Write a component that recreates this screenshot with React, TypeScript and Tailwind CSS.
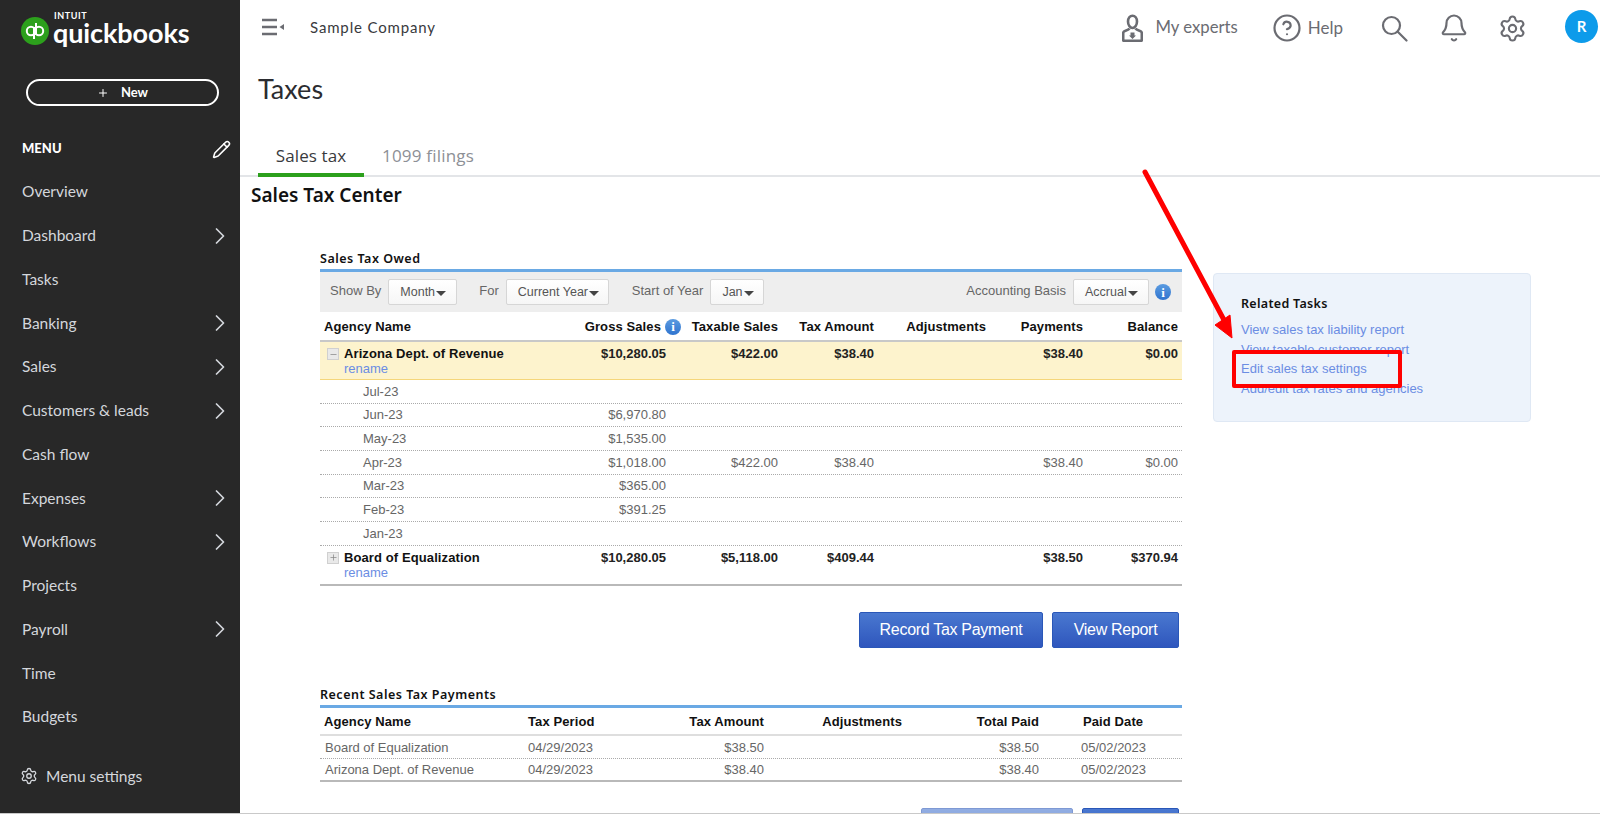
import { Bell, ChevronRight, CircleHelp, Minus, Pencil, Plus, Settings } from "lucide-react"

const menu = [
  { label: "Overview" },
  { label: "Dashboard", more: true },
  { label: "Tasks" },
  { label: "Banking", more: true },
  { label: "Sales", more: true },
  { label: "Customers & leads", more: true },
  { label: "Cash flow" },
  { label: "Expenses", more: true },
  { label: "Workflows", more: true },
  { label: "Projects" },
  { label: "Payroll", more: true },
  { label: "Time" },
  { label: "Budgets" },
]

const months = [
  ["Jul-23", "", "", "", "", ""],
  ["Jun-23", "$6,970.80", "", "", "", ""],
  ["May-23", "$1,535.00", "", "", "", ""],
  ["Apr-23", "$1,018.00", "$422.00", "$38.40", "$38.40", "$0.00"],
  ["Mar-23", "$365.00", "", "", "", ""],
  ["Feb-23", "$391.25", "", "", "", ""],
  ["Jan-23", "", "", "", "", ""],
]

const payments = [
  ["Board of Equalization", "04/29/2023", "$38.50", "$38.50", "05/02/2023"],
  ["Arizona Dept. of Revenue", "04/29/2023", "$38.40", "$38.40", "05/02/2023"],
]

const owedGrid = "grid grid-cols-[346px_112px_96px_112px_97px_95px] pr-[4px]"
const paidGrid = "grid grid-cols-[208px_112px_124px_138px_137px_143px]"

function Logo() {
  return (
    <div className="flex h-[60px] items-center pl-[21px] pt-[1px]">
      <svg width="28" height="28" viewBox="0 0 28 28" className="shrink-0">
        <circle cx="14" cy="14" r="14" fill="#2ca01c" />
        <circle cx="10" cy="14" r="4.2" fill="none" stroke="#fff" strokeWidth="2" />
        <circle cx="18" cy="14" r="4.2" fill="none" stroke="#fff" strokeWidth="2" />
        <path d="M13 10v12M15 6v12" stroke="#fff" strokeWidth="2" fill="none" />
      </svg>
      <div className="mb-[4px] ml-[4px] flex flex-col text-white font-['Lato',sans-serif]">
        <span className="h-[8px] pl-[1px] text-[9px] font-bold leading-[8px] tracking-[0.6px]">INTUIT</span>
        <span className="text-[27px] font-bold leading-[25px] tracking-[-0.1px]">quickbooks</span>
      </div>
    </div>
  )
}

function Sidebar() {
  return (
    <aside className="flex h-full w-[240px] shrink-0 flex-col bg-[#282828] font-['Lato',sans-serif] text-[#d4d7dc]">
      <Logo />
      <button className="ml-[26px] mt-[19px] flex h-[27px] w-[193px] items-center justify-center rounded-full border-2 border-white text-[13px] font-bold text-white">
        <Plus className="mr-[12px] h-[12px] w-[12px]" strokeWidth={2} />
        New
      </button>
      <div className="mt-[30px] flex h-[26px] items-center justify-between pl-[22px] pr-[9px]">
        <span className="text-[13px] font-black text-white">MENU</span>
        <Pencil className="h-[19px] w-[19px] text-white" strokeWidth={2} />
      </div>
      <nav className="mt-[8px] flex flex-col">
        {menu.map((item) => (
          <div key={item.label} className="flex h-[43.75px] items-center justify-between pl-[22px] pr-[6px] text-[15.5px]">
            <span>{item.label}</span>
            {item.more && <ChevronRight className="h-[28px] w-[28px]" strokeWidth={1.5} />}
          </div>
        ))}
      </nav>
      <div className="mt-[26px] flex items-center pl-[20px] text-[15.5px]">
        <Settings className="mr-[8px] h-[18px] w-[18px]" strokeWidth={1.75} />
        Menu settings
      </div>
    </aside>
  )
}

function TopBar() {
  return (
    <header className="flex h-[56px] items-center text-[#6b6c72] font-['Lato',sans-serif]">
      <svg width="24" height="18" viewBox="0 0 24 18" className="ml-[21px] mt-[-2px]">
        <path d="M1 2h15M1 9h15M1 16h15" stroke="#6b6c72" strokeWidth="2.4" fill="none" />
        <path d="M18.5 9l4.500-3v6z" fill="#6b6c72" />
      </svg>
      <span className="ml-[25px] mt-[-1px] text-[15px] tracking-[0.85px] text-[#393a3d]">Sample Company</span>
      <div className="ml-auto flex items-center pr-[2px]">
        <svg width="21" height="28" viewBox="0 0 21 28" fill="none" stroke="#6b6c72" strokeWidth="2.600">
          <path d="M6 7.500c0-3.500 2-5.800 4.500-5.800S15 4 15 7.500 13 14 10.500 14 6 11 6 7.500z" />
          <path d="M7.500 14.500c-1 1.500-3 1.800-5 2.700-1 .5-1.300 1-1.300 2V26c0 .6.300.9.900.9h16.800c.6 0 .9-.3.900-.9v-6.800c0-1-.3-1.500-1.300-2-2-.9-4-1.200-5-2.700" />
          <path d="M8.500 18.500h4v3h1.500l-3.500 3.500-3.500-3.500h1.500z" fill="#6b6c72" stroke="none" />
        </svg>
        <span className="ml-[13px] text-[16.700px]">My experts</span>
        <CircleHelp className="ml-[34px] h-[30px] w-[30px]" strokeWidth={1.75} />
        <span className="ml-[6px] text-[17px]">Help</span>
        <svg width="27" height="27" viewBox="0 0 27 27" fill="none" stroke="#6b6c72" strokeWidth="2.200" className="ml-[38px]">
          <circle cx="10.500" cy="10.500" r="8.500" />
          <path d="M16.500 16.500L25.500 25.500" strokeLinecap="round" />
        </svg>
        <Bell className="ml-[31px] h-[30px] w-[30px]" strokeWidth={1.75} />
        <Settings className="ml-[29px] h-[29px] w-[29px]" strokeWidth={1.75} />
        <div className="ml-[38px] mt-[-4px] flex h-[33px] w-[33px] items-center justify-center rounded-full bg-[#0d9bea] text-[15px] font-bold text-white">
          R
        </div>
      </div>
    </header>
  )
}

function Dropdown({ label, width }: { label: string; width: string }) {
  return (
    <div className={`${width} flex h-[26px] items-center rounded-[2px] border border-[#d6d6d6] bg-gradient-to-b from-white to-[#f6f6f6] pl-[11px] text-[12.500px] text-[#555]`}>
      {label}
      <span className="ml-[1px] mt-[2px] h-0 w-0 border-x-[5px] border-t-[5px] border-x-transparent border-t-[#444]" />
    </div>
  )
}

function InfoDot() {
  return (
    <span className="flex h-[16px] w-[16px] items-center justify-center rounded-full bg-gradient-to-b from-[#5b9be0] to-[#2f74cf] font-['Liberation_Serif',serif] text-[13px] font-bold leading-none text-white">
      i
    </span>
  )
}

function AgencyRow({ name, values, open }: { name: string; values: string[]; open?: boolean }) {
  const rowClass = open
    ? "h-[38px] border-b border-[#f5d67a] bg-[#fdf3cd] pt-[1px]"
    : "h-[40px] border-b-2 border-[#b9b9b9] pt-[1px]"
  return (
    <div className={`${owedGrid} ${rowClass}`}>
      <div className="flex pl-[7px] pt-[3px]">
        <span className="mt-[2px] flex h-[12px] w-[12px] items-center justify-center border border-[#d0d0d0] bg-[#e9e9e9] text-[#888]">
          {open ? <Minus className="h-[9px] w-[9px]" strokeWidth={2} /> : <Plus className="h-[9px] w-[9px]" strokeWidth={2} />}
        </span>
        <div className="ml-[5px] flex-1 leading-[15px]">
          <div className="flex justify-between">
            <span className="text-[13px] font-bold tracking-[0.1px] text-[#111]">{name}</span>
            <span className="text-[13px] font-bold text-[#222]">$10,280.05</span>
          </div>
          <div className="text-[13px] text-[#6b8de3]">rename</div>
        </div>
      </div>
      {values.map((value, i) => (
        <div key={i} className="pt-[3px] text-right text-[13px] font-bold leading-[15px] text-[#222]">
          {value}
        </div>
      ))}
    </div>
  )
}

function SalesTaxOwed() {
  return (
    <section>
      <h3 className="h-[21px] text-[12.500px] font-semibold leading-[21px] tracking-[0.5px] text-[#111] font-['Noto_Sans',sans-serif]">Sales Tax Owed</h3>
      <div className="flex h-[43px] items-center border-t-[3px] border-[#6aa9e4] bg-[#eeeeee] pl-[10px] text-[13px] text-[#666]">
        <span className="mt-[-2px]">Show By</span>
        <div className="ml-[7px]"><Dropdown label="Month" width="w-[69px]" /></div>
        <span className="ml-[22px] mt-[-2px]">For</span>
        <div className="ml-[7px]"><Dropdown label="Current Year" width="w-[103px]" /></div>
        <span className="ml-[23px] mt-[-2px]">Start of Year</span>
        <div className="ml-[7px]"><Dropdown label="Jan" width="w-[54px]" /></div>
        <span className="ml-auto mt-[-2px]">Accounting Basis</span>
        <div className="ml-[7px]"><Dropdown label="Accrual" width="w-[76px]" /></div>
        <div className="ml-[6px] mr-[11px] flex"><InfoDot /></div>
      </div>
      <div className={`${owedGrid} h-[30px] items-center border-b-2 border-[#c8c8c8] pt-[1px] text-[13px] font-bold tracking-[0.1px] text-[#111] text-right`}>
        <div className="flex items-center justify-between pl-[4px] text-left">
          <span>Agency Name</span>
          <span className="flex items-center">
            Gross Sales
            <span className="ml-[4px] mr-[-15px] flex"><InfoDot /></span>
          </span>
        </div>
        <div>Taxable Sales</div>
        <div>Tax Amount</div>
        <div>Adjustments</div>
        <div>Payments</div>
        <div>Balance</div>
      </div>
      <AgencyRow open name="Arizona Dept. of Revenue" values={["$422.00", "$38.40", "", "$38.40", "$0.00"]} />
      {months.map((row) => (
        <div key={row[0]} className={`${owedGrid} h-[23.700px] items-center border-b border-dotted border-[#aaa] text-[13px] text-[#666]`}>
          <div className="flex justify-between pl-[43px]">
            <span>{row[0]}</span>
            <span>{row[1]}</span>
          </div>
          <div className="text-right">{row[2]}</div>
          <div className="text-right">{row[3]}</div>
          <div />
          <div className="text-right">{row[4]}</div>
          <div className="text-right">{row[5]}</div>
        </div>
      ))}
      <AgencyRow name="Board of Equalization" values={["$5,118.00", "$409.44", "", "$38.50", "$370.94"]} />
    </section>
  )
}

function BlueButton({ label, width, faded }: { label: string; width: string; faded?: boolean }) {
  return (
    <button className={`${width} h-[36px] shrink-0 rounded-[2px] border border-[#2a57b8] bg-gradient-to-b from-[#4a78d0] to-[#2f56bd] pt-[1px] text-[16px] tracking-[-0.3px] text-white ${faded ? "opacity-60" : ""}`}>
      {label}
    </button>
  )
}

function RecentPayments() {
  return (
    <section className="mt-[36px]">
      <h3 className="h-[21px] text-[12.500px] font-semibold leading-[21px] tracking-[0.5px] text-[#111] font-['Noto_Sans',sans-serif]">Recent Sales Tax Payments</h3>
      <div className={`${paidGrid} h-[31px] items-center border-t-[3px] border-b-2 border-t-[#6aa9e4] border-b-[#dedede] pt-[1px] text-[13px] font-bold tracking-[0.1px] text-[#111]`}>
        <div className="pl-[4px]">Agency Name</div>
        <div>Tax Period</div>
        <div className="text-right">Tax Amount</div>
        <div className="text-right">Adjustments</div>
        <div className="text-right">Total Paid</div>
        <div className="pl-[44px]">Paid Date</div>
      </div>
      {payments.map((row, i) => (
        <div
          key={row[0]}
          className={`${paidGrid} h-[23px] items-center pt-[1px] text-[13px] text-[#666] ${i === 1 ? "border-b-2 border-[#b9b9b9]" : "border-b border-dotted border-[#aaa]"}`}
        >
          <div className="pl-[5px]">{row[0]}</div>
          <div>{row[1]}</div>
          <div className="text-right">{row[2]}</div>
          <div />
          <div className="text-right">{row[3]}</div>
          <div className="pl-[42px]">{row[4]}</div>
        </div>
      ))}
    </section>
  )
}

function RelatedTasks() {
  return (
    <div className="ml-[31px] mt-[25px] h-[149px] w-[318px] shrink-0 rounded-[4px] border border-[#dfe8f4] bg-[#edf3fb] pl-[27px] pt-[22px]">
      <div className="text-[12.500px] font-semibold leading-[16px] tracking-[0.3px] text-[#111] font-['Noto_Sans',sans-serif]">Related Tasks</div>
      <div className="mt-[8px] text-[13px] leading-[19.700px] text-[#6b8de3]">
        <div>View sales tax liability report</div>
        <div>View taxable customer report</div>
        <div>Edit sales tax settings</div>
        <div>Add/edit tax rates and agencies</div>
      </div>
    </div>
  )
}

export default function App() {
  return (
    <div className="h-[815px] w-[1600px] overflow-hidden bg-white">
      <div className="relative flex h-[814px] overflow-hidden border-b border-[#c9c9c9]">
        <Sidebar />
        <main className="min-w-0 flex-1">
          <TopBar />
          <h1 className="flex h-[66px] items-center pl-[18px] text-[27px] text-[#2b2c30] font-['Lato',sans-serif]">Taxes</h1>
          <div className="flex h-[55px] items-end border-b-2 border-[#e3e5e8] font-['Open_Sans',sans-serif] text-[17px]">
            <div className="mb-[-2px] ml-[18px] flex h-[42px] w-[106px] items-start justify-center border-b-4 border-[#2ca01c] pt-[8px] tracking-[0.1px] text-[#393a3d]">Sales tax</div>
            <div className="mb-[-2px] ml-[18px] h-[42px] pt-[8px] tracking-[0.2px] text-[#8d9096]">1099 filings</div>
          </div>
          <h2 className="flex h-[36px] items-center pl-[11px] pt-[1px] text-[19px] font-semibold text-[#111] font-['Noto_Sans',sans-serif]">Sales Tax Center</h2>
          <div className="flex pl-[80px] pt-[35px] font-['Liberation_Sans',sans-serif]">
            <div className="w-[862px] shrink-0">
              <SalesTaxOwed />
              <div className="mt-[26px] flex justify-end gap-[9px] pr-[3px]">
                <BlueButton label="Record Tax Payment" width="w-[184px]" />
                <BlueButton label="View Report" width="w-[127px]" />
              </div>
              <RecentPayments />
              <div className="mt-[26px] flex justify-end gap-[9px] pr-[3px]">
                <BlueButton faded label="" width="w-[152px]" />
                <BlueButton label="" width="w-[97px]" />
              </div>
            </div>
            <RelatedTasks />
          </div>
        </main>
        {/* annotation drawn over the screenshot */}
        <svg className="pointer-events-none absolute left-[1140px] top-[168px]" width="100" height="175" viewBox="0 0 100 175">
          <path d="M5 4L84 152" stroke="#ff0000" strokeWidth="5" strokeLinecap="round" fill="none" />
          <path d="M92 170L75 157L90 147z" fill="#ff0000" stroke="#ff0000" strokeWidth="1" />
        </svg>
        <div className="pointer-events-none absolute left-[1232px] top-[350px] h-[38px] w-[170px] rounded-[2px] border-4 border-[#ff0000]" />
      </div>
    </div>
  )
}
